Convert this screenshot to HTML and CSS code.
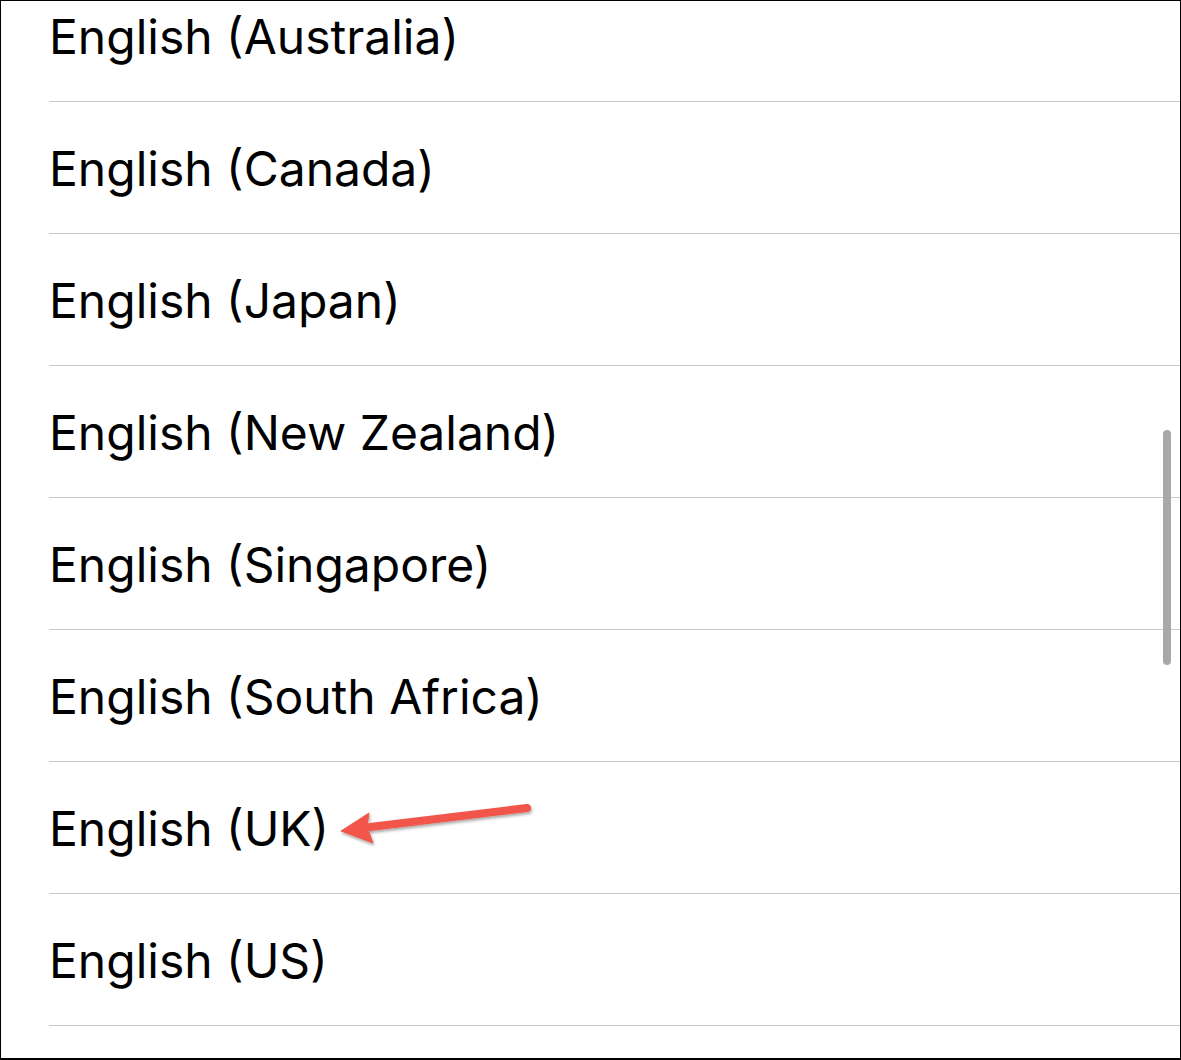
FILE: index.html
```html
<!DOCTYPE html>
<html lang="en">
<head>
  <meta charset="UTF-8">
  <title>Language</title>
  <link rel="stylesheet" href="styles.css">
</head>
<body>

  <div class="frame">
    <ul class="lang-list">
      <li>English (Australia)</li>
      <li>English (Canada)</li>
      <li>English (Japan)</li>
      <li>English (New Zealand)</li>
      <li>English (Singapore)</li>
      <li>English (South Africa)</li>
      <li>English (UK)</li>
      <li>English (US)</li>
      <li></li>
    </ul>

    <div class="scrollbar"></div>

    <!-- callout arrow -->
    <svg class="arrow" width="220" height="60" viewBox="0 0 220 60">
      <defs>
        <filter id="shadow" x="-10%" y="-30%" width="130%" height="180%">
          <feDropShadow dx="1" dy="2" stdDeviation="1.5" flood-color="#000" flood-opacity="0.35"/>
        </filter>
      </defs>
      <g filter="url(#shadow)" fill="#f2564c" stroke="#f2564c">
        <line x1="207" y1="18" x2="50" y2="37" stroke-width="8" stroke-linecap="round"/>
        <polygon points="21,41 49,23 47,37 53,53" stroke-width="1" stroke-linejoin="round"/>
      </g>
    </svg>
  </div>

</body>
</html>
```

FILE: styles.css
```css
html, body {
  margin: 0;
  padding: 0;
  background: #fff;
}
.frame {
  position: relative;
  width: 1181px;
  height: 1060px;
  box-sizing: border-box;
  border: 1px solid #000;
  border-bottom-width: 2px;
  overflow: hidden;
  font-family: Inter, "Noto Sans", sans-serif;
}
.lang-list {
  list-style: none;
  margin: -31px 0 0 48px;
  padding: 0;
}
.lang-list li {
  height: 129px;
  padding-top: 2px;
  border-bottom: 1px solid #c8c8c8;
  display: flex;
  align-items: center;
  font-size: 48px;
  color: #000;
}
.scrollbar {
  position: absolute;
  left: 1162px;
  top: 429px;
  width: 8px;
  height: 235px;
  border-radius: 4px;
  background: #a8a8a8;
}
.arrow {
  position: absolute;
  left: 319px;
  top: 789px;
}
```
